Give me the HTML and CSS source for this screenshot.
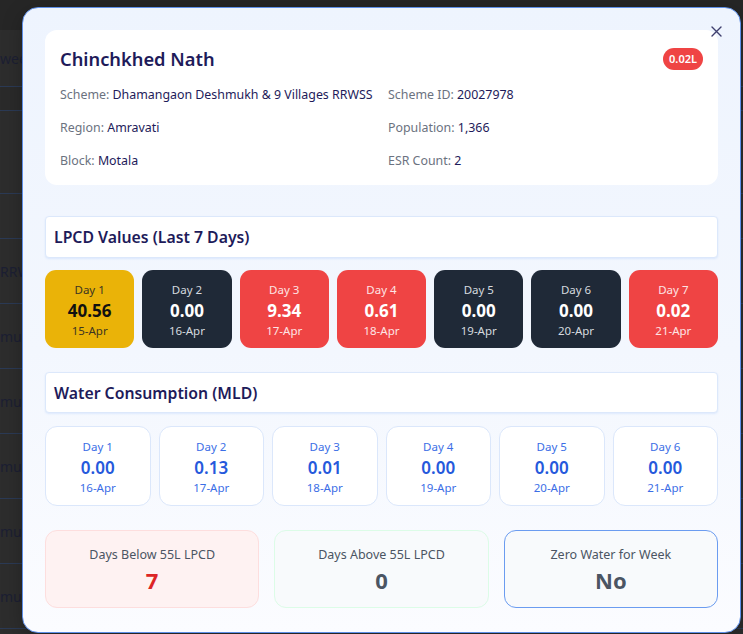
FILE: index.html
```html
<!DOCTYPE html>
<html lang="en">
<head>
<meta charset="utf-8">
<title>Village Details</title>
<link rel="stylesheet" href="styles.css">
</head>
<body>
<div class="backdrop">
  <div class="bg-row r1"><span>wee</span></div>
  <div class="bg-row r2"></div>
  <div class="bg-row r3"></div>
  <div class="bg-row r4"></div>
  <div class="bg-row r5"><span>RRW</span></div>
  <div class="bg-row r6"><span>muk</span></div>
  <div class="bg-row r6"><span>muk</span></div>
  <div class="bg-row r6"><span>muk</span></div>
  <div class="bg-row r6"><span>muk</span></div>
  <div class="bg-row r6"><span>muk</span></div>
</div>

<div class="modal">
  <button class="close" aria-label="Close">
    <svg width="11" height="11" viewBox="0 0 11 11"><path d="M1 1L10 10M10 1L1 10" stroke="#3f3f6e" stroke-width="1.4" stroke-linecap="round"/></svg>
  </button>

  <div class="info-card">
    <div class="info-head">
      <h2 class="title">Chinchkhed Nath</h2>
      <span class="badge">0.02L</span>
    </div>
    <div class="info-grid">
      <div class="info-item"><span class="lbl">Scheme:</span> <span class="val">Dhamangaon Deshmukh &amp; 9 Villages RRWSS</span></div>
      <div class="info-item"><span class="lbl">Scheme ID:</span> <span class="val">20027978</span></div>
      <div class="info-item"><span class="lbl">Region:</span> <span class="val">Amravati</span></div>
      <div class="info-item"><span class="lbl">Population:</span> <span class="val">1,366</span></div>
      <div class="info-item"><span class="lbl">Block:</span> <span class="val">Motala</span></div>
      <div class="info-item"><span class="lbl">ESR Count:</span> <span class="val">2</span></div>
    </div>
  </div>

  <div class="section-head lpcd-head">LPCD Values (Last 7 Days)</div>
  <div class="lpcd-grid">
    <div class="lpcd-card yellow"><div class="d">Day 1</div><div class="v">40.56</div><div class="dt">15-Apr</div></div>
    <div class="lpcd-card dark"><div class="d">Day 2</div><div class="v">0.00</div><div class="dt">16-Apr</div></div>
    <div class="lpcd-card red"><div class="d">Day 3</div><div class="v">9.34</div><div class="dt">17-Apr</div></div>
    <div class="lpcd-card red"><div class="d">Day 4</div><div class="v">0.61</div><div class="dt">18-Apr</div></div>
    <div class="lpcd-card dark"><div class="d">Day 5</div><div class="v">0.00</div><div class="dt">19-Apr</div></div>
    <div class="lpcd-card dark"><div class="d">Day 6</div><div class="v">0.00</div><div class="dt">20-Apr</div></div>
    <div class="lpcd-card red"><div class="d">Day 7</div><div class="v">0.02</div><div class="dt">21-Apr</div></div>
  </div>

  <div class="section-head water-head">Water Consumption (MLD)</div>
  <div class="water-grid">
    <div class="water-card"><div class="d">Day 1</div><div class="v">0.00</div><div class="dt">16-Apr</div></div>
    <div class="water-card"><div class="d">Day 2</div><div class="v">0.13</div><div class="dt">17-Apr</div></div>
    <div class="water-card"><div class="d">Day 3</div><div class="v">0.01</div><div class="dt">18-Apr</div></div>
    <div class="water-card"><div class="d">Day 4</div><div class="v">0.00</div><div class="dt">19-Apr</div></div>
    <div class="water-card"><div class="d">Day 5</div><div class="v">0.00</div><div class="dt">20-Apr</div></div>
    <div class="water-card"><div class="d">Day 6</div><div class="v">0.00</div><div class="dt">21-Apr</div></div>
  </div>

  <div class="summary">
    <div class="sum-box below"><div class="s-lbl">Days Below 55L LPCD</div><div class="s-val">7</div></div>
    <div class="sum-box above"><div class="s-lbl">Days Above 55L LPCD</div><div class="s-val">0</div></div>
    <div class="sum-box zero"><div class="s-lbl">Zero Water for Week</div><div class="s-val">No</div></div>
  </div>
</div>
</body>
</html>
```

FILE: styles.css
```css
* { box-sizing: border-box; }

html, body {
  margin: 0;
  padding: 0;
}

body {
  width: 743px;
  height: 634px;
  overflow: hidden;
  background: #2d2d2d;
  font-family: "Noto Sans", "Open Sans", sans-serif;
  position: relative;
}

/* dimmed page behind the modal */
.backdrop {
  border-top: 30px solid #262626;
}
.bg-row {
  border-bottom: 1px solid #2b3a55;
  display: flex;
  align-items: center;
  font-size: 14px;
  color: #1c1f33;
  overflow: hidden;
}
.bg-row span { margin-left: 0; }
.r1 { height: 57px; }
.r2 { height: 24px; background: #2a2a2a; }
.r3 { height: 83px; }
.r4 { height: 45px; }
.r5 { height: 65px; }
.r6 { height: 65px; }

/* modal */
.modal {
  position: absolute;
  left: 22px;
  top: 7px;
  width: 719px;
  height: 626px;
  border: 1px solid #5e8fe8;
  border-radius: 16px;
  background: linear-gradient(180deg, #eef4fe 0%, #f3f7fe 55%, #fbfcff 100%);
  padding: 22px 22px 0 22px;
  box-shadow: 0 6px 20px rgba(0,0,0,0.25);
}

.close {
  position: absolute;
  right: 17px;
  top: 17px;
  width: 13px;
  height: 13px;
  padding: 0;
  border: 0;
  background: none;
  display: flex;
  align-items: center;
  justify-content: center;
}

.info-card {
  background: #ffffff;
  border-radius: 12px;
  height: 155px;
  padding: 14px 15px 0 15px;
}
.info-head {
  display: flex;
  justify-content: space-between;
  align-items: center;
  height: 30px;
}
.title {
  margin: 0;
  font-size: 18.3px;
  font-weight: 600;
  color: #1e1b5a;
  line-height: 28px;
}
.badge {
  background: #ef4444;
  color: #ffffff;
  font-size: 11px;
  font-weight: 600;
  height: 22px;
  line-height: 22px;
  padding: 0 6px;
  border-radius: 11px;
}
.info-grid {
  display: grid;
  grid-template-columns: 328px 1fr;
  row-gap: 13px;
  margin-top: 11px;
}
.info-item {
  font-size: 12.4px;
  line-height: 20px;
  white-space: nowrap;
}
.lbl { color: #6b7280; }
.val { color: #1e1b5a; }

.section-head {
  background: #ffffff;
  border: 1px solid #dce8fb;
  border-radius: 4px;
  box-shadow: 0 1px 2px rgba(59,130,246,0.12);
  font-size: 15.8px;
  font-weight: 600;
  color: #1e1b5a;
  padding-left: 8px;
  display: flex;
  align-items: center;
}
.lpcd-head { margin-top: 31px; height: 42px; }
.water-head { margin-top: 24px; height: 41px; }

.lpcd-grid {
  margin-top: 12px;
  display: grid;
  grid-template-columns: repeat(7, 1fr);
  gap: 8px;
}
.lpcd-card {
  height: 78px;
  border-radius: 11px;
  text-align: center;
  padding-top: 12px;
}
.d, .dt {
  font-size: 11.5px;
  line-height: 16px;
}
.v {
  font-size: 17px;
  font-weight: 700;
  line-height: 22px;
  margin-top: 2px;
  margin-bottom: 1px;
}
.yellow { background: #eab308; color: #1f2430; }
.yellow .d, .yellow .dt { color: #3d3522; }
.yellow .v { color: #111111; }
.dark { background: #1f2937; color: #ffffff; }
.dark .d, .dark .dt { color: #d5d9df; }
.red { background: #ef4444; color: #ffffff; }
.red .d, .red .dt { color: #fde4e4; }

.water-grid {
  margin-top: 13px;
  display: grid;
  grid-template-columns: repeat(6, 1fr);
  gap: 8px;
}
.water-card {
  height: 80px;
  background: #ffffff;
  border: 1px solid #dbe7fb;
  border-radius: 12px;
  text-align: center;
  padding-top: 12px;
}
.water-card .d, .water-card .dt { color: #3b6ee6; }
.water-card .v { color: #2559dc; font-weight: 600; }

.summary {
  margin-top: 24px;
  display: grid;
  grid-template-columns: repeat(3, 1fr);
  gap: 15px;
}
.sum-box {
  height: 78px;
  border-radius: 12px;
  border: 1px solid;
  text-align: center;
  padding-top: 15px;
}
.s-lbl {
  font-size: 12.5px;
  line-height: 18px;
  color: #4b5563;
}
.s-val {
  font-size: 22px;
  font-weight: 700;
  line-height: 28px;
  margin-top: 2px;
  color: #4b5563;
}
.below { background: #fef2f2; border-color: #fddede; }
.below .s-val { color: #dc2626; }
.above { background: #f8fafc; border-color: #dcfce7; }
.zero { background: #f8fafc; border-color: #6b9cf0; }
```
